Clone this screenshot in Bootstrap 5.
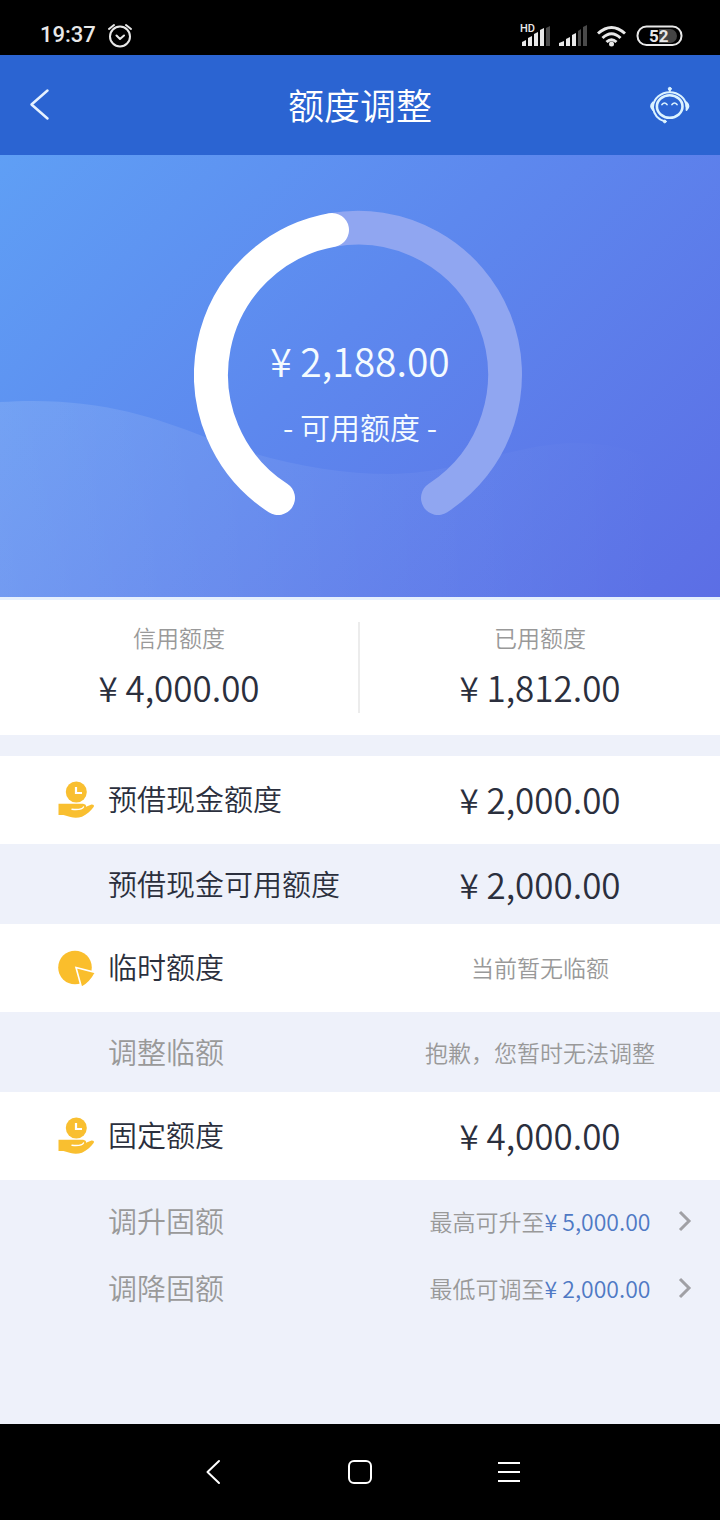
<!DOCTYPE html>
<html lang="zh-CN">
<head>
<meta charset="utf-8">
<meta name="viewport" content="width=device-width, initial-scale=1">
<title>额度调整</title>
<link href="https://cdn.jsdelivr.net/npm/bootstrap@5.3.0/dist/css/bootstrap.min.css" rel="stylesheet">
<style>
  :root { --ink: #2b2f3d; --muted-ink: #999; --pale: #eef1fa; --brand: #2b64d2; --link: #4f79c4; }
  body { font-family: "Noto Sans CJK SC DemiLight", "Noto Sans CJK SC", sans-serif; font-weight: 350; color: var(--ink); background: var(--pale); }
  svg { display: block; flex: none; }
  .status-bar { height: 55px; padding: 14px 36px 0 40px; font-family: Roboto, sans-serif; color: #e8e8e8; }
  .clock { font-size: 22px; font-weight: 500; line-height: 40px; }
  .app-bar { height: 100px; background: var(--brand); display: grid; grid-template-columns: 1fr auto 1fr; padding: 0 20px; }
  .app-title { font-size: 36px; line-height: 48px; font-weight: 350; padding-bottom: 3px; }
  .hero { height: 445px; padding-top: 54px; color: #f4fbff; border-bottom: 3px solid #e6f0fd;
    background: linear-gradient(135deg, #5f9ff5 0%, #5d88ee 45%, #5c6ee5 100%); }
  .gauge { display: grid; justify-items: center; }
  .gauge > * { grid-area: 1 / 1; position: relative; }
  .gauge-text { padding-top: 121px; }
  .gauge-amount { font-size: 39px; line-height: 60px; }
  .gauge-label { font-size: 30px; line-height: 40px; margin-top: 16px; }
  .stats { padding: 22px 0; }
  .stat { height: 91px; }
  .stat:first-child { border-right: 2px solid #ececec; }
  .caption { font-size: 23px; line-height: 32px; color: var(--muted-ink); }
  .amount { font-size: 35px; line-height: 52px; }
  .stat .caption { line-height: 30px; }
  .stat .amount { margin-top: 9px; }
  .section-gap { height: 21px; }
  .line-item { height: 88px; padding-bottom: 2px; background: #fff; font-size: 29px; color: var(--ink); }
  .line-sub { height: 80px; padding-bottom: 0; background: var(--pale); }
  .line-link { height: 67px; padding-bottom: 2px; background: var(--pale); }
  .item-name { padding-left: 57px; gap: 13px; }
  .no-icon { padding-left: 108px; }
  .item-value { display: grid; grid-template-columns: 1fr auto 1fr; align-items: center; }
  .item-value > :first-child { grid-column: 2; }
  .chev { justify-self: end; margin-right: 28px; }
  .dim { color: var(--muted-ink); }
  .limit { color: var(--link); }
  .system-nav { height: 96px; padding: 0 138px; }
</style>
</head>
<body class="d-flex flex-column min-vh-100">

<div class="status-bar bg-black d-flex justify-content-between align-items-center pb-0">
  <div class="d-flex align-items-center gap-2">
    <span class="clock">19:37</span>
    <svg width="28" height="28" viewBox="-1 0 28 28" fill="none" stroke="#e8e8e8" stroke-width="2" stroke-linecap="round" stroke-linejoin="round"><circle cx="15" cy="15.500" r="10"/><path d="M11.500 14.500l3.500 3.500 4-3.500M4 8l5-4M21 4l5 4"/></svg>
  </div>
  <svg width="164" height="32" viewBox="520 18 164 32" fill="#e8e8e8">
    <text x="520" y="31" font-size="11" font-weight="500">HD</text>
    <g><path d="M522 41l4-2v6h-4zM528 37l4-2v10h-4zM534 33l4-2v14h-4zM540 29l4-2v18h-4z"/><path d="M546 27l4-2v20h-4z" fill="#4a4a4a"/></g>
    <path d="M559 42l5-2v5h-5zM566 38l4-2v9h-4zM572 34l4-2v13h-4z"/><path d="M578 30l3-2v17h-3zM583 26l4-2v21h-4z" fill="#4a4a4a"/>
    <g fill="none" stroke="#e8e8e8" stroke-width="3"><path d="M598 32.500Q611.500 20.500 625 32.500M602.500 37Q611.500 28.500 620.500 37M606.500 41Q611.500 36.500 616.500 41"/></g>
    <circle cx="611.500" cy="43" r="2.500"/>
    <path d="M659 28h11a7 7 0 0 1 0 14h-11z" fill="#444"/>
    <rect x="637.500" y="25.500" width="44" height="18.500" rx="9" fill="none" stroke="#e8e8e8" stroke-width="2"/>
    <text x="649" y="41" font-size="17" font-weight="700">52</text>
  </svg>
</div>

<header class="app-bar align-items-center text-white">
  <button type="button" class="btn border-0 p-0 me-auto" aria-label="返回">
    <svg width="40" height="48" viewBox="20 81 40 48" fill="none" stroke="#e6f2ff" stroke-width="2.500" stroke-linecap="round" stroke-linejoin="round"><path d="M47.500 90.500L31.500 104.500 47.500 118.500"/></svg>
  </button>
  <h1 class="app-title m-0">额度调整</h1>
  <button type="button" class="btn border-0 p-0 ms-auto me-2" aria-label="客服">
    <svg width="44" height="44" viewBox="648 83 44 44" fill="none" stroke="#dcf3ff" stroke-linecap="round">
      <ellipse cx="669.700" cy="106.500" rx="12.800" ry="11.200" stroke-width="2.600"/>
      <path d="M653 106.500a16.800 15.500 0 0 1 33.500 0M653 108c1 6 5 11.500 11.500 13.300" stroke-width="2"/>
      <path d="M662 104.500q2.500-3 5 0M672 104.500q2.500-3 5 0" stroke-width="1.700"/>
      <path d="M669.800 91v-2" stroke-width="2"/><circle cx="669.800" cy="88.800" r="1.500" fill="#dcf3ff"/><circle cx="664.800" cy="121.500" r="1.400" fill="#dcf3ff"/>
      <path d="M653 102.500v7.500q-4-3.700 0-7.500M686.500 102.500v7.500q4-3.700 0-7.500" fill="#dcf3ff" stroke-width="1.800" stroke-linejoin="round"/>
    </svg>
  </button>
</header>

<section class="hero position-relative">
  <svg class="position-absolute top-0 start-0 w-100 h-100" viewBox="0 155 720 442" preserveAspectRatio="none" aria-hidden="true">
    <defs><linearGradient id="wave"><stop offset="0" stop-color="#fff" stop-opacity=".13"/><stop offset=".5" stop-color="#fff" stop-opacity=".05"/><stop offset=".92" stop-color="#fff" stop-opacity="0"/></linearGradient></defs>
    <path d="M0 402C90 396 150 415 205 437C265 460 330 474 390 474C460 474 510 444 575 443C640 443 680 470 720 510V597H0z" fill="url(#wave)"/>
  </svg>
  <div class="gauge">
    <svg width="332" height="310" viewBox="194 209 332 310" fill="none" stroke-width="34" stroke-linecap="round" aria-hidden="true">
      <path d="M332 230A147 147 0 0 1 438 498" stroke="#90a6f1"/>
      <path d="M278 498A147 147 0 0 1 332 230" stroke="#fff"/>
    </svg>
    <div class="gauge-text text-center">
      <div class="gauge-amount">¥ 2,188.00</div>
      <div class="gauge-label">- 可用额度 -</div>
    </div>
  </div>
</section>

<main class="flex-grow-1">
  <section class="stats bg-white">
    <div class="row g-0 text-center">
      <div class="col-6 stat"><div class="caption">信用额度</div><div class="amount">¥ 4,000.00</div></div>
      <div class="col-6 stat"><div class="caption">已用额度</div><div class="amount">¥ 1,812.00</div></div>
    </div>
  </section>
  <div class="section-gap"></div>

  <div class="row g-0 line-item align-items-center">
    <div class="col-6 item-name d-flex align-items-center">
      <svg width="38" height="40" viewBox="57 779 38 40"><use href="#hand"/></svg><span>预借现金额度</span>
    </div>
    <div class="col-6 item-value"><span class="amount">¥ 2,000.00</span></div>
  </div>
  <div class="row g-0 line-item line-sub align-items-center">
    <div class="col-6 no-icon">预借现金可用额度</div>
    <div class="col-6 item-value"><span class="amount">¥ 2,000.00</span></div>
  </div>
  <div class="row g-0 line-item align-items-center">
    <div class="col-6 item-name d-flex align-items-center">
      <svg width="38" height="40" viewBox="57 947 38 40" fill="#fabe2c"><circle cx="75" cy="967.500" r="16.800"/><path d="M76 967.500L95.500 972.500Q90.500 982.500 81.500 987.500z" stroke="#fff" stroke-width="1.600"/></svg><span>临时额度</span>
    </div>
    <div class="col-6 item-value"><span class="caption">当前暂无临额</span></div>
  </div>
  <div class="row g-0 line-item line-sub align-items-center dim">
    <div class="col-6 no-icon">调整临额</div>
    <div class="col-6 item-value"><span class="caption">抱歉，您暂时无法调整</span></div>
  </div>
  <div class="row g-0 line-item align-items-center">
    <div class="col-6 item-name d-flex align-items-center">
      <svg width="38" height="40" viewBox="57 779 38 40">
        <g id="hand" fill="#f9bf30"><circle cx="76.300" cy="792" r="10.500"/><path d="M76 787v6h6" fill="none" stroke="#fff" stroke-width="2.200"/>
        <path d="M58.500 803.800H83q3.500.7 3 3l5.500-2.200q3-.2 2.300 2.200c-3 4.500-7 7.500-11.800 10q-6 1.700-11.500.2l-7-2h-5z"/><path d="M72 809.300q10 .9 11.500-2.300" fill="none" stroke="#fff" stroke-width="1.400" stroke-linecap="round"/></g>
      </svg><span>固定额度</span>
    </div>
    <div class="col-6 item-value"><span class="amount">¥ 4,000.00</span></div>
  </div>
  <nav class="pt-2" aria-label="调整固额">
    <a href="#raise" class="row g-0 line-item line-link align-items-center text-decoration-none dim">
      <span class="col-6 no-icon">调升固额</span>
      <span class="col-6 item-value"><span class="caption">最高可升至<span class="limit">¥ 5,000.00</span></span>
        <svg class="chev" width="14" height="24" viewBox="0 0 14 24" fill="none" stroke="#a0a0a5" stroke-width="3"><path d="M2 3l9 9-9 9"/></svg></span>
    </a>
    <a href="#lower" class="row g-0 line-item line-link align-items-center text-decoration-none dim">
      <span class="col-6 no-icon">调降固额</span>
      <span class="col-6 item-value"><span class="caption">最低可调至<span class="limit">¥ 2,000.00</span></span>
        <svg class="chev" width="14" height="24" viewBox="0 0 14 24" fill="none" stroke="#a0a0a5" stroke-width="3"><path d="M2 3l9 9-9 9"/></svg></span>
    </a>
  </nav>
</main>

<footer class="system-nav bg-black d-flex align-items-center">
  <button type="button" class="btn border-0 p-0 flex-fill" aria-label="后退"><svg class="mx-auto" width="28" height="28" viewBox="0 0 28 28" fill="none" stroke="#fff" stroke-width="2" stroke-linecap="round" stroke-linejoin="round"><path d="M21 3L9.500 14 21 25"/></svg></button>
  <button type="button" class="btn border-0 p-0 flex-fill" aria-label="主页"><svg class="mx-auto" width="28" height="28" viewBox="0 0 28 28" fill="none" stroke="#fff" stroke-width="2"><rect x="3" y="3" width="22" height="22" rx="5"/></svg></button>
  <button type="button" class="btn border-0 p-0 flex-fill" aria-label="菜单"><svg class="mx-auto" width="28" height="28" viewBox="0 0 28 28" fill="none" stroke="#fff" stroke-width="2"><path d="M4 5h22M4 14h22M4 23h22"/></svg></button>
</footer>
<script src="https://cdn.jsdelivr.net/npm/bootstrap@5.3.0/dist/js/bootstrap.bundle.min.js"></script>
</body>
</html>
